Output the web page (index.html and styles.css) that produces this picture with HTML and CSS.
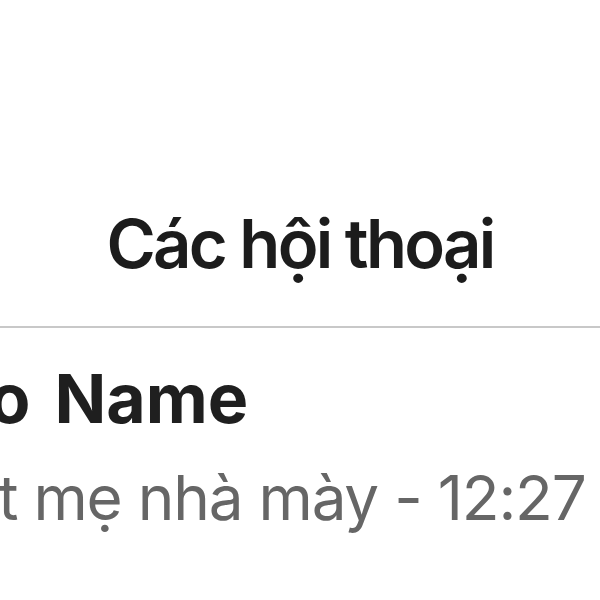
FILE: index.html
```html
<!DOCTYPE html>
<html lang="vi">
  <head>
    <meta charset="utf-8">
    <link rel="stylesheet" href="styles.css">
  </head>
  <body>
    <div class="screen">
      <header class="nav-bar">
        <h1 class="nav-title">Các hội thoại</h1>
      </header>

      <ul class="chat-list">
        <li class="chat-item">
          <div class="chat-name">Demo Name</div>
          <div class="chat-preview">Chat mẹ nhà mày - 12:27</div>
        </li>
      </ul>
    </div>
  </body>
</html>
```

FILE: styles.css
```css
/* Общие стили */
body {
  margin: 0;
  background: #ffffff;
  font-family: 'Inter', 'Noto Sans', sans-serif;
  overflow: hidden;
}

.screen {
  width: 600px;
  height: 600px;
  overflow: hidden;
}

.nav-bar {
  height: 284px;
  padding-bottom: 42px;
  display: flex;
  align-items: flex-end;
  justify-content: center;
  border-bottom: 2px solid #c8c8c8;
}

.nav-title {
  margin: 0;
  font-size: 67px;
  line-height: 80px;
  font-weight: 600;
  letter-spacing: -2.7px;
  color: #1c1c1c;
}

.chat-list {
  list-style: none;
  margin: 0;
  padding: 0;
}

.chat-item {
  padding-top: 30px;
  white-space: nowrap;
}

.chat-name {
  margin-left: -163px;
  font-size: 68px;
  line-height: 80px;
  font-weight: 700;
  word-spacing: 8px;
  color: #1f1f1f;
}

.chat-preview {
  margin-top: 20px;
  margin-left: -115px;
  font-size: 62px;
  line-height: 80px;
  letter-spacing: -1.2px;
  color: #666666;
}
```
